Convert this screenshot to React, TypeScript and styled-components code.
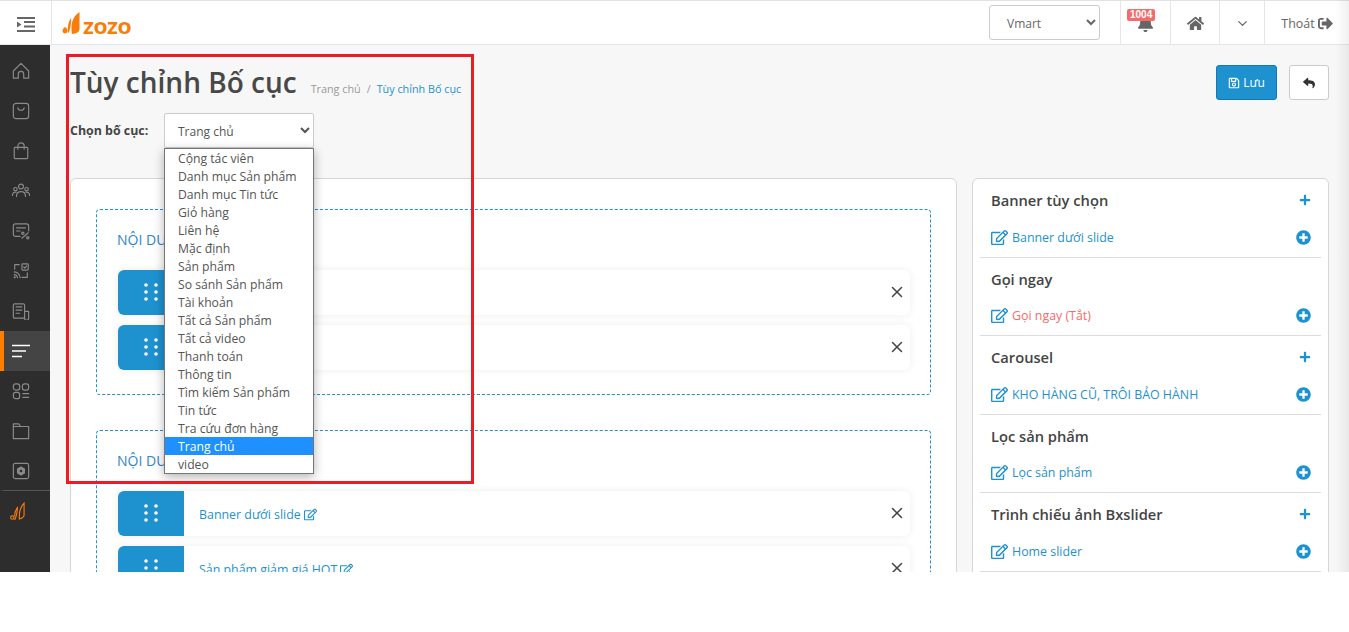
import React from 'react';
import styled, { createGlobalStyle } from 'styled-components';
import { FaBell, FaHome, FaPlus, FaPlusCircle, FaRegEdit, FaRegSave, FaReply, FaSignOutAlt } from 'react-icons/fa';
import { FiChevronDown, FiX } from 'react-icons/fi';

const blue = '#1e91cf';

const GlobalStyle = createGlobalStyle`
  html, body { margin: 0; padding: 0; background: #fff; }
  body { font-family: "Open Sans", "Noto Sans", sans-serif; font-size: 12px; color: #444; }
  * { box-sizing: border-box; }
`;

const Page = styled.div`
  position: relative;
  display: flex;
  flex-direction: column;
  width: 1349px;
  height: 572px;
  overflow: hidden;
`;

const EdgeShade = styled.div`
  position: absolute;
  top: 0;
  right: 0;
  bottom: 0;
  width: 14px;
  background: linear-gradient(to right, rgba(0, 0, 0, 0), rgba(0, 0, 0, 0.06));
  pointer-events: none;
`;

const TopBar = styled.header`
  display: flex;
  align-items: stretch;
  height: 45px;
  flex: none;
  background: #fff;
  border-top: 1px solid #e2e2e2;
  border-bottom: 1px solid #e6e6e6;
`;

const Toggle = styled.div`
  display: flex;
  align-items: center;
  justify-content: center;
  width: 52px;
  padding-top: 3px;
  border-right: 1px solid #e6e6e6;
`;

const Logo = styled.div`
  display: flex;
  align-items: flex-end;
  gap: 3px;
  margin-left: 10px;
  padding-bottom: 10px;
  flex: 1;
`;

const LogoText = styled.span`
  font-family: Lato, sans-serif;
  font-weight: 900;
  font-size: 23.5px;
  line-height: 17px;
  color: #f97d0b;
`;

const TopSelect = styled.select`
  align-self: center;
  width: 111px;
  height: 35px;
  margin-right: 20px;
  padding: 2px 0 0 13px;
  font: 12px "Open Sans", sans-serif;
  color: #666;
  background: #fff;
  border: 1px solid #ccc;
  border-radius: 3px;
`;

const TopCell = styled.div<{ $w: number }>`
  position: relative;
  display: flex;
  align-items: center;
  justify-content: center;
  gap: 3px;
  width: ${(p) => p.$w}px;
  padding-top: 2px;
  color: #666;
  font-size: 12.5px;
  border-left: 1px solid #e6e6e6;
`;

const Badge = styled.span`
  position: absolute;
  top: 8px;
  left: 6px;
  padding: 0 3px;
  font: bold 10px/12px "Liberation Sans", sans-serif;
  color: #fff;
  background: #f56b6b;
  border-radius: 2px;
`;

const Body = styled.div`
  display: flex;
  flex: 1;
  min-height: 0;
`;

const Sidebar = styled.nav`
  width: 50px;
  flex: none;
  padding-top: 6px;
  background: #2d2d2d;
`;

const SideItem = styled.div<{ $active?: boolean; $last?: boolean; $brand?: boolean }>`
  display: flex;
  align-items: center;
  justify-content: center;
  height: 40px;
  background: ${(p) => (p.$active ? '#444' : 'transparent')};
  border-left: 4px solid ${(p) => (p.$active ? '#ff7f00' : 'transparent')};
  border-bottom: ${(p) => (p.$last ? '1px solid #555' : '0')};
  padding-right: ${(p) => (p.$brand ? 20 : 12)}px;
`;

const Content = styled.main`
  flex: 1;
  min-width: 0;
  padding: 20px 20px 0;
  background: #f7f7f7;
`;

const TitleRow = styled.div`
  display: flex;
  justify-content: space-between;
  height: 48px;
`;

const TitleWrap = styled.div`
  display: flex;
  align-items: flex-start;
  gap: 14px;
`;

const Title = styled.h1`
  margin: -1px 0 0;
  font-size: 28px;
  line-height: 36px;
  font-weight: 600;
  color: #484848;
`;

const Crumbs = styled.div`
  display: flex;
  gap: 6px;
  margin-top: 16px;
  font-size: 10.8px;
  color: #999;
`;

const CrumbLink = styled.span`
  color: ${blue};
`;

const Actions = styled.div`
  display: flex;
  gap: 12px;
`;

const SaveButton = styled.button`
  display: flex;
  align-items: center;
  justify-content: center;
  gap: 3px;
  width: 61px;
  height: 35px;
  font: 12px "Open Sans", sans-serif;
  color: #fff;
  background: ${blue};
  border: 1px solid #1878ad;
  border-radius: 3px;
`;

const BackButton = styled.button`
  display: flex;
  align-items: center;
  justify-content: center;
  width: 40px;
  height: 35px;
  color: #333;
  background: #fff;
  border: 1px solid #ccc;
  border-radius: 3px;
`;

const FormRow = styled.div`
  position: relative;
  display: flex;
  align-items: flex-start;
  height: 65px;
`;

const FormLabel = styled.label`
  width: 94px;
  padding-top: 9px;
  font-size: 12.4px;
  font-weight: 700;
  color: #444;
`;

const LayoutSelect = styled.select`
  width: 150px;
  height: 35px;
  padding: 2px 0 0 9px;
  font: 12px "Open Sans", sans-serif;
  color: #555;
  background: #fff;
  border: 1px solid #ccc;
  border-radius: 2px;
`;

const OptionList = styled.div`
  position: absolute;
  top: 35px;
  left: 94px;
  z-index: 3;
  width: 150px;
  background: #fff;
  border: 1px solid #767676;
  box-shadow: 0 3px 10px rgba(0, 0, 0, 0.3);
`;

const OptionItem = styled.div<{ $selected?: boolean }>`
  height: 18px;
  padding-left: 13px;
  font-size: 12.2px;
  line-height: 20px;
  white-space: nowrap;
  color: ${(p) => (p.$selected ? '#fff' : '#555')};
  background: ${(p) => (p.$selected ? '#1e90ff' : 'transparent')};
`;

const Columns = styled.div`
  display: grid;
  grid-template-columns: 887px 357px;
  gap: 15px;
`;

const Card = styled.section`
  height: 420px;
  background: #fff;
  border: 1px solid #d6d6d6;
  border-radius: 6px;
`;

const LayoutCard = styled(Card)`
  padding: 30px 25px;
`;

const SlotBox = styled.div`
  height: 186px;
  margin-bottom: 35px;
  padding: 20px 20px 0 21px;
  border: 1px dashed ${blue};
  border-radius: 4px;
`;

const SlotTitle = styled.div`
  height: 40px;
  margin-left: -1px;
  font-size: 14px;
  line-height: 20px;
  color: #2f86cc;
`;

const RowList = styled.div`
  display: flex;
  flex-direction: column;
  gap: 10.5px;
`;

const SlotRow = styled.div`
  display: flex;
  align-items: center;
  height: 44.5px;
  background: #fff;
  border-radius: 6px;
  box-shadow: 0 0 8px rgba(0, 0, 0, 0.07);
`;

const Handle = styled.div`
  display: flex;
  align-items: center;
  justify-content: center;
  width: 66px;
  height: 100%;
  background: ${blue};
  border-radius: 6px 0 0 6px;
`;

const RowLabel = styled.span`
  display: flex;
  align-items: center;
  gap: 3px;
  flex: 1;
  margin-left: 15px;
  padding-top: 2px;
  font-size: 12.4px;
  color: ${blue};
`;

const RemoveIcon = styled(FiX)`
  margin-right: 4px;
  color: #444;
`;

const WidgetCard = styled(Card)`
  padding: 0 7px;
`;

const WidgetGroup = styled.div`
  height: 78.5px;
  padding: 11px 10px 0 11px;
  border-bottom: 1px solid #ddd;
`;

const GroupHead = styled.div`
  display: flex;
  align-items: center;
  justify-content: space-between;
  height: 20px;
  font-size: 14.7px;
  font-weight: 600;
  color: #444;
`;

const GroupItem = styled.div<{ $off?: boolean }>`
  display: flex;
  align-items: center;
  justify-content: space-between;
  height: 20px;
  margin-top: 17px;
  font-size: 12.4px;
  color: ${(p) => (p.$off ? '#f56b6b' : blue)};
`;

const ItemLink = styled.span`
  display: flex;
  align-items: center;
  gap: 4px;
`;

const BlueEdit = styled(FaRegEdit)`
  color: ${blue};
`;

const Annotation = styled.div`
  position: absolute;
  top: 54px;
  left: 66px;
  z-index: 5;
  width: 408px;
  height: 430px;
  border: 3px solid #ed1c24;
  pointer-events: none;
`;

const Line = ({ children }: { children: React.ReactNode }) => (
  <svg width="18" height="18" viewBox="0 0 20 20" fill="none" stroke="#8a8a8a" strokeWidth="1.3" strokeLinecap="round" strokeLinejoin="round">
    {children}
  </svg>
);

const sideIcons = [
  <Line><path d="M1.500 10 10 1.500 18.500 10v8h-5.500v-4.500a3 3 0 0 0-6 0V18H1.500z" /></Line>,
  <Line><rect x="1.500" y="1.500" width="17" height="17" rx="3" /><path d="M6.500 6.500c.5 3.500 6.500 3.500 7 0" /></Line>,
  <Line><rect x="2.500" y="6" width="15" height="12.500" rx="1" /><path d="M6.500 8V4.500a3.500 3.500 0 0 1 7 0V8" /></Line>,
  <Line><circle cx="10" cy="5" r="2.700" /><circle cx="3.800" cy="8" r="1.900" /><circle cx="16.200" cy="8" r="1.900" /><path d="M5 16c0-7 10-7 10 0M0.500 15c0-3.500 2.500-4 4-3.800M19.500 15c0-3.500-2.500-4-4-3.800" /></Line>,
  <Line><path d="M9 16H4a2.500 2.500 0 0 1-2.500-2.500v-9A2.500 2.500 0 0 1 4 2h12a2.500 2.500 0 0 1 2.500 2.500V10" /><path d="M5 6.500h10M5 10h4M11 18l7-6" /><circle cx="12" cy="12.500" r="1.300" /><circle cx="17.500" cy="17.500" r="1.300" /></Line>,
  <Line><path d="M8 3H3v5M17 12v5h-6" /><rect x="11" y="2" width="7" height="7" rx="1" /><path d="m13 5.500 1.200 1.300 2-2.300M2.500 11a6.500 6.500 0 0 1 6.500 6.500M2.500 14a3.500 3.500 0 0 1 3.500 3.500" /><circle cx="3" cy="17" r=".6" /></Line>,
  <Line><path d="M14 18H3a1.500 1.500 0 0 1-1.500-1.500v-13A1.500 1.500 0 0 1 3 2h9.500A1.500 1.500 0 0 1 14 3.500V18a2 2 0 0 0 4.500 0v-7.500H14" /><path d="M4.500 5.500h6.500M4.500 9h6.500M4.500 12.500h4" /></Line>,
  null,
  <Line><rect x="1.500" y="2" width="7" height="7" rx="2.500" /><rect x="11.500" y="2" width="7" height="7" rx="2.500" /><rect x="1.500" y="11.500" width="7" height="7" rx="2.500" /><path d="M12 13h6.500M12 17h6.500" /></Line>,
  <Line><path d="M1.500 18.500V2h6l2 3h9v13.500z" /><path d="M1.500 5h8" /></Line>,
  <Line><rect x="1.500" y="1.500" width="17" height="17" rx="2" /><path d="M10 5.500 13.800 7.700v4.600L10 14.500 6.200 12.300V7.700z" fill="#8a8a8a" /><circle cx="10" cy="10" r="1.500" fill="#2d2d2d" stroke="none" /></Line>,
];

const ActiveIcon = () => (
  <svg width="18" height="18" viewBox="0 0 18 18" stroke="#fff" strokeWidth="1.300">
    <path d="M0 3.500h18M0 9h14M0 14.500h10" />
  </svg>
);

const GripDots = () => (
  <svg width="14" height="18" viewBox="0 0 14 18" fill="#fff">
    {[2, 9, 16].map((y) => [2, 12].map((x) => <circle key={`${x}-${y}`} cx={x} cy={y} r="1.800" />))}
  </svg>
);

const options = [
  'Cộng tác viên', 'Danh mục Sản phẩm', 'Danh mục Tin tức', 'Giỏ hàng', 'Liên hệ', 'Mặc định',
  'Sản phẩm', 'So sánh Sản phẩm', 'Tài khoản', 'Tất cả Sản phẩm', 'Tất cả video', 'Thanh toán',
  'Thông tin', 'Tìm kiếm Sản phẩm', 'Tin tức', 'Tra cứu đơn hàng', 'Trang chủ', 'video',
];

const slots = [
  { title: 'NỘI DUNG', rows: ['Slide', 'Menu'], edit: false },
  { title: 'NỘI DUNG', rows: ['Banner dưới slide', 'Sản phẩm giảm giá HOT'], edit: true },
];

const widgets = [
  { name: 'Banner tùy chọn', item: 'Banner dưới slide', add: true },
  { name: 'Gọi ngay', item: 'Gọi ngay (Tắt)', off: true },
  { name: 'Carousel', item: 'KHO HÀNG CŨ, TRÔI BẢO HÀNH', add: true },
  { name: 'Lọc sản phẩm', item: 'Lọc sản phẩm' },
  { name: 'Trình chiếu ảnh Bxslider', item: 'Home slider', add: true },
];

const App = () => {
  return (
    <Page>
      <GlobalStyle />
      <TopBar>
        <Toggle>
          <svg width="18" height="15" viewBox="0 0 18 15" fill="#666">
            <path d="M0 0h18v2H0zM7 4h11v2H7zM7 8.500h11v2H7zM0 13h18v2H0zM0 4.500 4.500 7.500 0 10.500z" />
          </svg>
        </Toggle>
        <Logo>
          <svg width="18" height="22" viewBox="0 0 18 22" fill="#f97d0b">
            <path d="M3 15c2 1 3 3 2.500 5-1 2-5 2-5-1 0-1.500 1-3 2.500-4zM9 6c.5 4-.5 11-2.500 15.500C5 17 6 10 9 6zM17.500 0v17c0 3-3 4.500-7.500 5C8.500 13 10 5 17.500 0z" />
          </svg>
          <LogoText>zozo</LogoText>
        </Logo>
        <TopSelect defaultValue="Vmart">
          <option>Vmart</option>
        </TopSelect>
        <TopCell $w={50}>
          <FaBell size={17} />
          <Badge>1004</Badge>
        </TopCell>
        <TopCell $w={49}><FaHome size={17} /></TopCell>
        <TopCell $w={45}><FiChevronDown size={15} /></TopCell>
        <TopCell $w={85}>
          Thoát <FaSignOutAlt size={15} />
        </TopCell>
      </TopBar>
      <Body>
        <Sidebar>
          {sideIcons.map((icon, i) => (
            <SideItem key={i} $active={i === 7} $last={i === 10}>
              {i === 7 ? <ActiveIcon /> : icon}
            </SideItem>
          ))}
          <SideItem $brand>
            <svg width="15" height="19" viewBox="0 0 16 20" fill="none" stroke="#f97d0b" strokeWidth="1.200">
              <circle cx="2.500" cy="16.500" r="1.800" />
              <path d="M5 15c0-4 1-7 3-9-.3 4-1 9-3 13M15 1v13c0 2-2 3-5 4-.5-7 1-13 5-17z" />
            </svg>
          </SideItem>
        </Sidebar>
        <Content>
          <TitleRow>
            <TitleWrap>
              <Title>Tùy chỉnh Bố cục</Title>
              <Crumbs>
                <span>Trang chủ</span>
                <span>/</span>
                <CrumbLink>Tùy chỉnh Bố cục</CrumbLink>
              </Crumbs>
            </TitleWrap>
            <Actions>
              <SaveButton><FaRegSave size={12} /> Lưu</SaveButton>
              <BackButton><FaReply size={12} /></BackButton>
            </Actions>
          </TitleRow>
          <FormRow>
            <FormLabel>Chọn bố cục:</FormLabel>
            <LayoutSelect defaultValue="Trang chủ">
              {options.map((o) => <option key={o}>{o}</option>)}
            </LayoutSelect>
            <OptionList>
              {options.map((o) => (
                <OptionItem key={o} $selected={o === 'Trang chủ'}>{o}</OptionItem>
              ))}
            </OptionList>
          </FormRow>
          <Columns>
            <LayoutCard>
              {slots.map((slot, i) => (
                <SlotBox key={i}>
                  <SlotTitle>{slot.title}</SlotTitle>
                  <RowList>
                    {slot.rows.map((row) => (
                      <SlotRow key={row}>
                        <Handle><GripDots /></Handle>
                        <RowLabel>
                          {row}
                          {slot.edit && <FaRegEdit size={13} />}
                        </RowLabel>
                        <RemoveIcon size={18} />
                      </SlotRow>
                    ))}
                  </RowList>
                </SlotBox>
              ))}
            </LayoutCard>
            <WidgetCard>
              {widgets.map((w) => (
                <WidgetGroup key={w.name}>
                  <GroupHead>
                    {w.name}
                    {w.add && <FaPlus size={12} color={blue} />}
                  </GroupHead>
                  <GroupItem $off={w.off}>
                    <ItemLink>
                      <BlueEdit size={17} />
                      {w.item}
                    </ItemLink>
                    <FaPlusCircle size={15} color={blue} />
                  </GroupItem>
                </WidgetGroup>
              ))}
            </WidgetCard>
          </Columns>
        </Content>
      </Body>
      <EdgeShade />
      <Annotation />
    </Page>
  );
};

export default App;
